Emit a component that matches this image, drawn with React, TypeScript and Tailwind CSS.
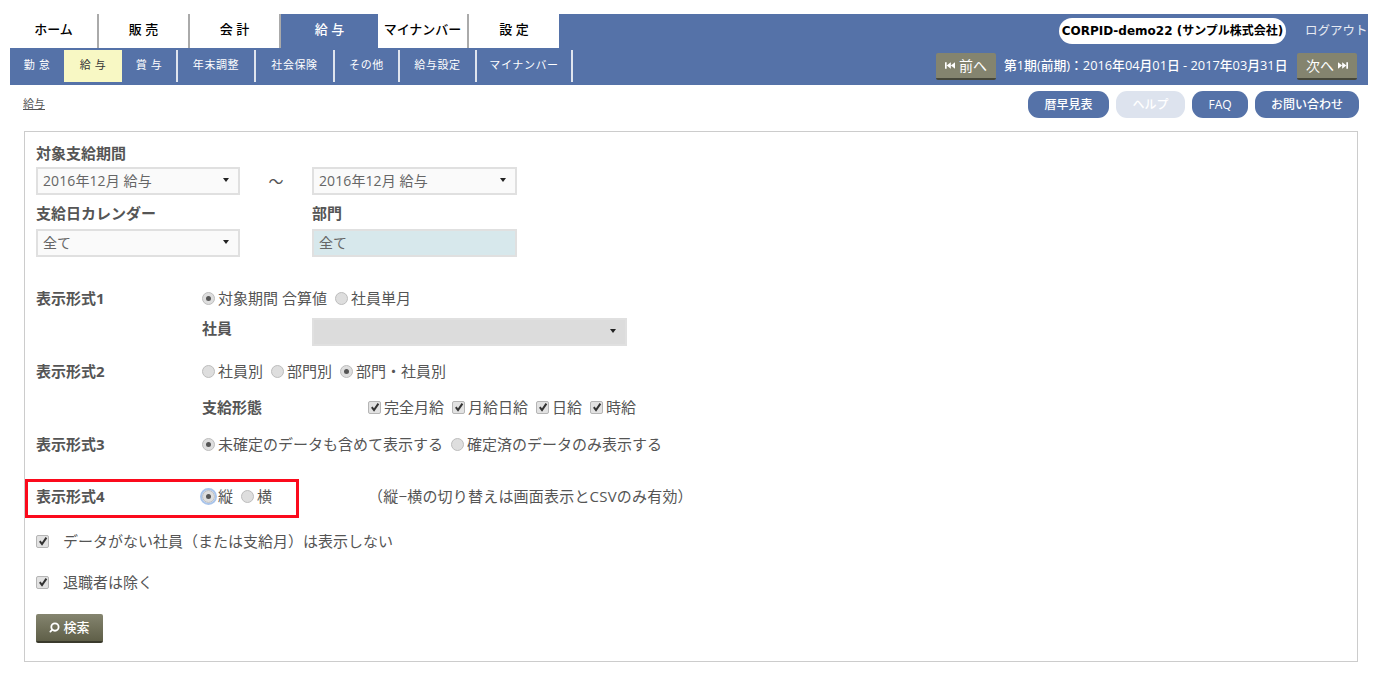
import React from 'react';
import { Search } from 'lucide-react';

const topTabs = [
  { label: 'ホーム', w: 'w-[89px]' },
  { label: '販 売', w: 'w-[91px]' },
  { label: '会 計', w: 'w-[91px]' },
  { label: '給 与', w: 'w-[97px]', active: true },
  { label: 'マイナンバー', w: 'w-[91px]' },
  { label: '設 定', w: 'w-[90px]', last: true },
];

const subTabs = [
  { label: '勤 怠', w: 'w-[54px]' },
  { label: '給 与', w: 'w-[58px]', active: true },
  { label: '賞 与', w: 'w-[56px]', line: true },
  { label: '年末調整', w: 'w-[78px]', line: true },
  { label: '社会保険', w: 'w-[79px]', line: true },
  { label: 'その他', w: 'w-[65px]', line: true },
  { label: '給与設定', w: 'w-[77px]', line: true },
  { label: 'マイナンバー', w: 'w-[96px]', line: true },
];

const Select = ({ text = '', className = 'w-[204px] bg-[#fafafa]', arrow = true }: { text?: string; className?: string; arrow?: boolean }) => (
  <div className={`flex h-[28px] items-center justify-between border-2 border-[#e0e0e0] pb-[2px] pl-[5px] pr-[9px] text-[14px] tracking-[0.1px] text-[#666] ${className}`}>
    <span>{text}</span>
    {arrow && <span className="h-0 w-0 border-x-[3px] border-t-[4px] border-x-transparent border-t-[#222]" />}
  </div>
);

const Radio = ({ on = false, focus = false }: { on?: boolean; focus?: boolean }) => (
  <span className={`mr-[3px] flex h-[13px] w-[13px] shrink-0 items-center justify-center rounded-full border border-[#bdbdbd] bg-[#dedede] ${focus ? 'outline-2 outline-[#a9c4ea]' : ''}`}>
    {on && <span className="h-[5px] w-[5px] rounded-full bg-[#555]" />}
  </span>
);

const Check = () => (
  <span className="mr-[3px] flex h-[13px] w-[13px] shrink-0 items-center justify-center rounded-[2px] border border-[#b5b5b5] bg-[#e2e2e2]">
    <svg width="10" height="10" viewBox="0 0 10 10">
      <path d="M1.8 5.2 L4 8 L8.4 1.6" fill="none" stroke="#333" strokeWidth="2" />
    </svg>
  </span>
);

const Option = ({ children, className = 'mr-[8px]' }: { children: React.ReactNode; className?: string }) => (
  <label className={`flex items-center ${className}`}>{children}</label>
);

const SkipIcon = ({ flip = false }: { flip?: boolean }) => (
  <svg width="10" height="7" viewBox="0 0 12 8" className={flip ? 'rotate-180' : ''}>
    <path d="M0 0h2v8H0zM7 0v8L2 4zM12 0v8L7 4z" fill="#fff" />
  </svg>
);

const NavButton = ({ children }: { children: React.ReactNode }) => (
  <div className="flex h-[27px] w-[60px] items-center justify-center gap-[4px] rounded-[2px] border-b-2 border-[#45463a] bg-[#84846f] text-[14px] text-white">
    {children}
  </div>
);

const Pill = ({ label, className }: { label: string; className: string }) => (
  <div className={`flex h-[27px] items-center justify-center rounded-[11px] text-[12px] font-medium ${className}`}>{label}</div>
);

export default function App() {
  return (
    <div className="min-h-[678px] bg-white pt-[14px] font-['Open_Sans','Noto_Sans_CJK_JP',sans-serif] text-[#555]">
      <header className="mx-[10px] flex h-[71px] w-[1358px] justify-between bg-[#5572a8]">
        <div className="flex flex-col">
          <nav className="flex h-[34px]">
            {topTabs.map((t) => (
              <div
                key={t.label}
                className={`flex items-center justify-center pb-[2px] text-[13px] font-medium whitespace-nowrap ${t.w} ${
                  t.active ? 'text-white' : `bg-white text-black ${t.last ? '' : 'border-r-2 border-[#aaa]'}`
                }`}
              >
                {t.label}
              </div>
            ))}
          </nav>
          <nav className="flex h-[37px] items-start pt-[2px]">
            {subTabs.map((t) => (
              <div
                key={t.label}
                className={`flex h-[32px] items-center justify-center pb-[2px] text-[11px] tracking-[0.6px] whitespace-nowrap ${t.w} ${
                  t.active ? 'bg-[#f8f8c4] text-[#333]' : 'text-white'
                } ${t.line ? 'border-r-2 border-[#dfe4ee]' : ''}`}
              >
                {t.label}
              </div>
            ))}
          </nav>
        </div>
        <div className="flex flex-col items-end">
          <div className="flex h-[39px] items-start pt-[4px]">
            <div className="flex h-[26px] w-[227px] items-center justify-center rounded-[13px] bg-white font-['DejaVu_Sans','Noto_Sans_CJK_JP',sans-serif] text-[12px] font-bold whitespace-nowrap text-black">
              CORPID-demo22 (サンプル株式会社)
            </div>
            <span className="ml-[19px] mr-[2px] flex h-[26px] w-[61px] items-center text-[12.5px] whitespace-nowrap text-[#e6eaf2]">ログアウト</span>
          </div>
          <div className="flex h-[32px] items-start pr-[11px]">
            <NavButton>
              <SkipIcon />
              前へ
            </NavButton>
            <span className="mx-[8px] flex h-[25px] w-[285px] items-center text-[12.8px] font-medium whitespace-nowrap text-white">
              第1期(前期)：2016年04月01日 - 2017年03月31日
            </span>
            <NavButton>
              次へ
              <SkipIcon flip />
            </NavButton>
          </div>
        </div>
      </header>

      <div className="mx-[23px] mt-[6px] flex h-[27px] w-[1336px] items-center justify-between">
        <a className="text-[11px] text-[#555] underline">給与</a>
        <div className="flex gap-[7px]">
          <Pill label="暦早見表" className="w-[81px] bg-[#5572a8] text-white" />
          <Pill label="ヘルプ" className="w-[69px] bg-[#dde3ee] text-white" />
          <Pill label="FAQ" className="w-[56px] bg-[#5572a8] text-white" />
          <Pill label="お問い合わせ" className="w-[104px] bg-[#5572a8] text-white" />
        </div>
      </div>

      <main className="mx-[24px] mt-[13px] h-[531px] w-[1334px] border border-[#ccc] pl-[11px] pt-[11px] text-[15px]">
        <div className="flex h-[24px] items-center pb-[4px] font-bold">対象支給期間</div>
        <div className="flex items-center">
          <Select text="2016年12月 給与" />
          <span className="w-[72px] text-center">〜</span>
          <Select text="2016年12月 給与" className="w-[205px] bg-[#fafafa]" />
        </div>
        <div className="mt-[6px] flex h-[28px] items-center pb-[4px] font-bold">
          <span className="w-[276px]">支給日カレンダー</span>
          <span>部門</span>
        </div>
        <div className="flex">
          <Select text="全て" />
          <div className="ml-[72px]">
            <Select text="全て" className="w-[205px] border-[#c5d3d8] bg-[#d7e8ec]" arrow={false} />
          </div>
        </div>

        <div className="mt-[31px] flex h-[24px] items-center pb-[4px]">
          <span className="w-[166px] font-bold">表示形式1</span>
          <Option><Radio on />対象期間 合算値</Option>
          <Option><Radio />社員単月</Option>
        </div>
        <div className="mt-[6px] flex h-[28px] items-center">
          <span className="ml-[166px] w-[110px] pb-[8px] font-bold">社員</span>
          <Select className="w-[315px] bg-[#dcdcdc]" />
        </div>
        <div className="mt-[15px] flex h-[24px] items-center pb-[4px]">
          <span className="w-[166px] font-bold">表示形式2</span>
          <Option><Radio />社員別</Option>
          <Option><Radio />部門別</Option>
          <Option><Radio on />部門・社員別</Option>
        </div>
        <div className="mt-[12px] flex h-[24px] items-center pb-[4px]">
          <span className="ml-[166px] w-[166px] font-bold">支給形態</span>
          <Option><Check />完全月給</Option>
          <Option><Check />月給日給</Option>
          <Option><Check />日給</Option>
          <Option><Check />時給</Option>
        </div>
        <div className="mt-[13px] flex h-[24px] items-center pb-[4px]">
          <span className="w-[166px] font-bold">表示形式3</span>
          <Option><Radio on />未確定のデータも含めて表示する</Option>
          <Option><Radio />確定済のデータのみ表示する</Option>
        </div>

        <div className="mt-[21px] flex items-center">
          <div className="-ml-[11px] flex h-[39px] w-[274px] items-center border-[3px] border-[#fb0a1c] pb-[4px] pl-[8px]">
            <span className="w-[166px] font-bold">表示形式4</span>
            <Option><Radio on focus />縦</Option>
            <Option><Radio />横</Option>
          </div>
          <span className="mb-[4px] ml-[69px] tracking-[0.2px]">（縦−横の切り替えは画面表示とCSVのみ有効）</span>
        </div>

        <label className="mt-[13px] flex h-[24px] items-center pb-[4px]">
          <Check />
          <span className="ml-[11px]">データがない社員（または支給月）は表示しない</span>
        </label>
        <label className="mt-[17px] flex h-[24px] items-center pb-[4px]">
          <Check />
          <span className="ml-[11px]">退職者は除く</span>
        </label>

        <button className="mt-[18px] flex h-[29px] w-[67px] items-center justify-center gap-[3px] rounded-[2px] border-b-2 border-[#3a3a2c] bg-gradient-to-b from-[#85856f] to-[#5f5f48] text-[13px] font-medium text-white">
          <Search size={11} strokeWidth={4} className="-scale-x-100" />
          検索
        </button>
      </main>
    </div>
  );
}
